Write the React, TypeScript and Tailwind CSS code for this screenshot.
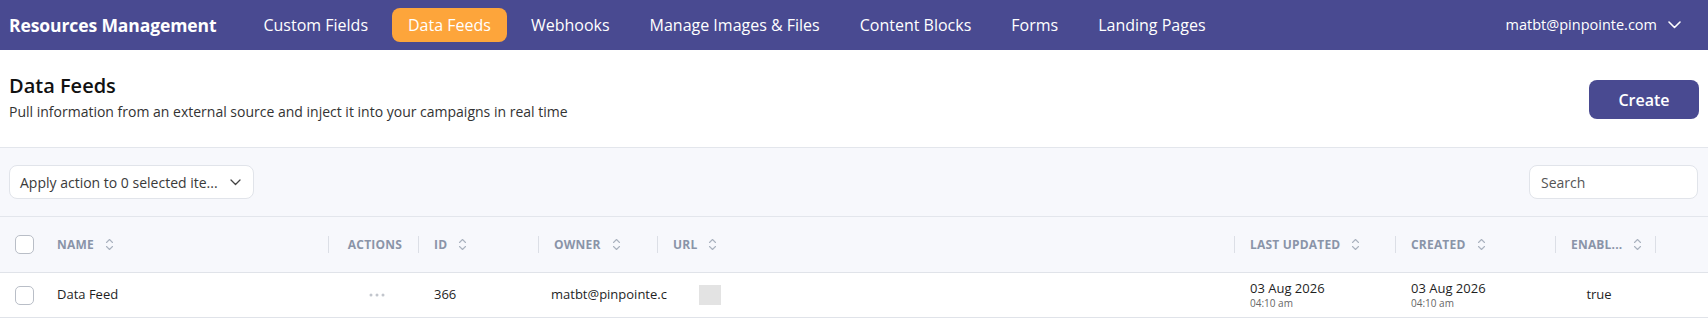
import React from "react";

const font = { fontFamily: '"Open Sans", "Noto Sans", sans-serif' };

function SortIcon() {
  return (
    <svg width="9" height="13" viewBox="0 0 9 13" fill="none" className="ml-[11px] shrink-0">
      <path d="M1.5 4.5 L4.5 1.5 L7.5 4.5" stroke="#aab2bf" strokeWidth="1.1" strokeLinecap="round" strokeLinejoin="round" />
      <path d="M1.5 8.5 L4.5 11.5 L7.5 8.5" stroke="#aab2bf" strokeWidth="1.1" strokeLinecap="round" strokeLinejoin="round" />
    </svg>
  );
}

function Divider() {
  return <span className="ml-auto h-[17px] w-px bg-[#dcdfe6] shrink-0" />;
}

function Checkbox() {
  return <span className="block h-[19px] w-[19px] rounded-[5px] border border-[#b9bec7] bg-white" />;
}

function HeadCell({ w, label, sort = true, children }: { w: string; label?: string; sort?: boolean; children?: React.ReactNode }) {
  return (
    <div className={`${w} h-full flex items-center pl-[15px] shrink-0`}>
      {children ?? (
        <>
          <span className="text-[12px] font-bold uppercase tracking-[0.2px] text-[#8a94a8] whitespace-nowrap">{label}</span>
          {sort && <SortIcon />}
        </>
      )}
      <Divider />
    </div>
  );
}

export default function App() {
  const nav = ["Custom Fields", "Data Feeds", "Webhooks", "Manage Images & Files", "Content Blocks", "Forms", "Landing Pages"];
  return (
    <div style={font} className="w-[1708px] h-[320px] bg-white overflow-hidden text-[#1f1f1f]">
      {/* Top nav */}
      <div className="h-[50px] bg-[#494a91] flex items-center pl-[9px] pr-[27px] text-white">
        <div className="text-[17.5px] font-bold tracking-[-0.1px] whitespace-nowrap">Resources Management</div>
        <div className="ml-[31px] flex items-center gap-[8px]">
          {nav.map((n) =>
            n === "Data Feeds" ? (
              <div key={n} className="h-[34px] px-[16px] rounded-[8px] bg-[#fda53b] flex items-center text-[16px] whitespace-nowrap">
                {n}
              </div>
            ) : (
              <div key={n} className="h-[34px] px-[16px] flex items-center text-[16px] whitespace-nowrap">
                {n}
              </div>
            )
          )}
        </div>
        <div className="ml-auto flex items-center gap-[11px] text-[14.5px]">
          <span>matbt@pinpointe.com</span>
          <svg width="13" height="8" viewBox="0 0 13 8" fill="none">
            <path d="M1 1 L6.5 6.5 L12 1" stroke="white" strokeWidth="1.6" strokeLinecap="round" strokeLinejoin="round" />
          </svg>
        </div>
      </div>

      {/* Page header */}
      <div className="h-[98px] border-b border-[#e3e6ec] flex justify-between items-start pl-[9px] pr-[9px] pt-[22px]">
        <div>
          <div className="text-[20px] leading-[28px] font-semibold text-[#111]">Data Feeds</div>
          <div className="mt-[2px] text-[14px] leading-[20px] text-[#333]">
            Pull information from an external source and inject it into your campaigns in real time
          </div>
        </div>
        <button className="mt-[8px] h-[39px] w-[110px] rounded-[8px] bg-[#494a91] text-white text-[16px] font-semibold">
          Create
        </button>
      </div>

      {/* Toolbar */}
      <div className="h-[69px] bg-[#f7f8fc] border-b border-[#e3e6ec] flex items-start justify-between pl-[9px] pr-[10px] pt-[17px]">
        <div className="h-[34px] w-[245px] rounded-[8px] border border-[#e1e4ea] bg-white flex items-center pl-[10px] pr-[12px]">
          <span className="text-[14px] text-[#3a3a3a] whitespace-nowrap">Apply action to 0 selected ite...</span>
          <svg width="11" height="7" viewBox="0 0 11 7" fill="none" className="ml-auto">
            <path d="M1 1 L5.5 5.5 L10 1" stroke="#444" strokeWidth="1.3" strokeLinecap="round" strokeLinejoin="round" />
          </svg>
        </div>
        <div className="h-[34px] w-[169px] rounded-[8px] border border-[#e1e4ea] bg-white flex items-center pl-[11px]">
          <span className="text-[14px] text-[#555]">Search</span>
        </div>
      </div>

      {/* Table header */}
      <div className="h-[56px] bg-[#f7f8fc] border-b border-[#e0e3e9] flex items-center">
        <div className="w-[42px] h-full flex items-center pl-[15px] shrink-0">
          <Checkbox />
        </div>
        <HeadCell w="w-[287px]" label="Name" />
        <div className="w-[90px] h-full flex items-center shrink-0">
          <span className="ml-auto mr-[16px] text-[12px] font-bold uppercase tracking-[0.2px] text-[#8a94a8]">Actions</span>
          <span className="h-[17px] w-px bg-[#dcdfe6]" />
        </div>
        <HeadCell w="w-[120px]" label="ID" />
        <HeadCell w="w-[119px]" label="Owner" />
        <HeadCell w="w-[577px]" label="URL" />
        <HeadCell w="w-[161px]" label="Last Updated" />
        <HeadCell w="w-[160px]" label="Created" />
        <HeadCell w="w-[100px]" label="Enabl..." />
        <div className="flex-1" />
      </div>

      {/* Row */}
      <div className="h-[45px] border-b border-[#e0e3e9] flex items-center text-[13px] text-[#1f1f1f]">
        <div className="w-[42px] h-full flex items-center pl-[15px] shrink-0">
          <Checkbox />
        </div>
        <div className="w-[287px] pl-[15px] shrink-0">Data Feed</div>
        <div className="w-[90px] flex justify-center pl-[6px] shrink-0">
          <svg width="16" height="4" viewBox="0 0 16 4">
            <circle cx="2" cy="2" r="1.5" fill="#c2c6cd" />
            <circle cx="8" cy="2" r="1.5" fill="#c2c6cd" />
            <circle cx="14" cy="2" r="1.5" fill="#c2c6cd" />
          </svg>
        </div>
        <div className="w-[120px] pl-[15px] shrink-0">366</div>
        <div className="w-[119px] pl-[12px] shrink-0 h-full flex items-center">
          <span className="block w-[116px] shrink-0 overflow-hidden whitespace-nowrap">matbt@pinpointe.com</span>
        </div>
        <div className="w-[577px] pl-[41px] shrink-0">
          <span className="block h-[20px] w-[22px] bg-[#e3e3e3]" />
        </div>
        <div className="w-[161px] pl-[15px] shrink-0 leading-[16px]">
          <div>03 Aug 2026</div>
          <div className="text-[10px] text-[#666] leading-[14px]">04:10 am</div>
        </div>
        <div className="w-[160px] pl-[15px] shrink-0 leading-[16px]">
          <div>03 Aug 2026</div>
          <div className="text-[10px] text-[#666] leading-[14px]">04:10 am</div>
        </div>
        <div className="w-[100px] pl-[15px] pr-[29px] shrink-0 text-center">true</div>
        <div className="flex-1" />
      </div>
    </div>
  );
}
